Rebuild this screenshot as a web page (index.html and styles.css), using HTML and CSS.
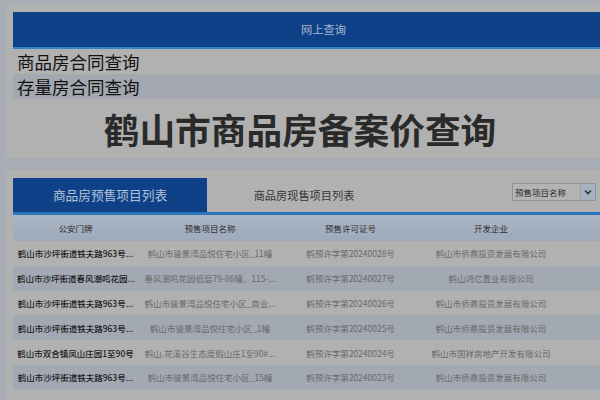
FILE: index.html
```html
<!DOCTYPE html>
<html lang="zh-CN">
<head>
  <meta charset="UTF-8">
  <title>鹤山市商品房备案价查询</title>
  <link rel="stylesheet" href="styles.css">
</head>
<body>
  <div class="page">
    <div class="panel top-panel">
      <div class="bar">网上查询</div>
      <div class="link-row">商品房合同查询</div>
      <div class="link-row alt">存量房合同查询</div>
      <h1 class="title">鹤山市商品房备案价查询</h1>
    </div>

    <div class="panel list-panel">
      <div class="tabs">
        <div class="tab active">商品房预售项目列表</div>
        <div class="tab">商品房现售项目列表</div>
        <div class="search-type">
          <span class="search-label">预售项目名称</span>
          <span class="search-btn">
            <svg width="8" height="6" viewBox="0 0 8 6"><path d="M1,1.5 L4,4.5 L7,1.5" stroke="#2c3440" stroke-width="1.6" fill="none"/></svg>
          </span>
        </div>
      </div>
      <table class="list">
        <colgroup>
          <col class="c1"><col class="c2"><col class="c3"><col class="c4"><col class="c5">
        </colgroup>
        <thead>
          <tr><th>公安门牌</th><th>预售项目名称</th><th>预售许可证号</th><th>开发企业</th><th></th></tr>
        </thead>
        <tbody>
          <tr><td class="addr">鹤山市沙坪街道铁夫路963号...</td><td>鹤山市骏景湾品悦住宅小区_11幢</td><td>鹤预许字第20240028号</td><td>鹤山市侨鼎投资发展有限公司</td><td></td></tr>
          <tr class="alt"><td class="addr">鹤山市沙坪街道春风潮鸣花园...</td><td>春风潮鸣花园低层79-86幢、115-...</td><td>鹤预许字第20240027号</td><td>鹤山鸿亿置业有限公司</td><td></td></tr>
          <tr><td class="addr">鹤山市沙坪街道铁夫路963号...</td><td>鹤山市骏景湾品悦住宅小区_商业...</td><td>鹤预许字第20240026号</td><td>鹤山市侨鼎投资发展有限公司</td><td></td></tr>
          <tr class="alt"><td class="addr">鹤山市沙坪街道铁夫路963号...</td><td>鹤山市骏景湾品悦住宅小区_1幢</td><td>鹤预许字第20240025号</td><td>鹤山市侨鼎投资发展有限公司</td><td></td></tr>
          <tr><td class="addr">鹤山市双合镇凤山庄园1至90号</td><td>鹤山.花溪谷生态度假山庄1至90#...</td><td>鹤预许字第20240024号</td><td>鹤山市国祥房地产开发有限公司</td><td></td></tr>
          <tr class="alt"><td class="addr">鹤山市沙坪街道铁夫路963号...</td><td>鹤山市骏景湾品悦住宅小区_15幢</td><td>鹤预许字第20240023号</td><td>鹤山市侨鼎投资发展有限公司</td><td></td></tr>
          <tr class="last"><td></td><td></td><td></td><td></td><td></td></tr>
        </tbody>
      </table>
    </div>
  </div>
</body>
</html>
```

FILE: styles.css
```css
html, body {
  margin: 0;
  overflow: hidden;
}
body {
  background: #a8acb4;
  font-family: "Noto Sans CJK SC", "Noto Sans", sans-serif;
  color: #222;
}
.page {
  width: 700px;
  padding: 4px 0 0 6px;
}
.panel {
  width: 621px;
  padding: 8px 7px;
  background: #b1b1b1;
  border-radius: 4px;
}
.list-panel {
  margin-top: 12px;
}
/* cabeçalho azul */
.bar {
  height: 35px;
  line-height: 35px;
  background: #0f4189;
  border-bottom: 2px solid #2f86cc;
  color: #a9b7cc;
  font-size: 11.3px;
  text-align: center;
}
.link-row {
  height: 25px;
  line-height: 25px;
  padding-left: 4px;
  font-size: 17.5px;
  color: #111;
}
.link-row.alt {
  background: #a4a9b1;
}
.title {
  width: 574px;
  margin: 8px 0 0 0;
  font-size: 35.7px;
  line-height: 43px;
  font-weight: bold;
  color: #2a2a2a;
  text-align: center;
}
.tabs {
  display: flex;
  height: 34px;
  border-bottom: 3px solid #2b77b9;
}
.tab {
  width: 194px;
  line-height: 34px;
  text-align: center;
  font-size: 11.2px;
  color: #363636;
}
.tab.active {
  background: #0f4189;
  color: #b5c2d6;
  font-size: 12.7px;
}
.search-type {
  display: flex;
  align-self: flex-start;
  margin: 5px 38px 0 auto;
  width: 82px;
  height: 16px;
  border: 1px solid #8e939b;
  background: #b3b3b3;
}
.search-label {
  flex: 1;
  padding-left: 2px;
  font-size: 8.5px;
  line-height: 16px;
  color: #2a2a2a;
}
.search-btn {
  width: 14px;
  display: flex;
  align-items: center;
  justify-content: center;
  background: #a7b1c0;
  border-left: 1px solid #9aa1ab;
}
.list {
  width: 621px;
  border-collapse: collapse;
  table-layout: fixed;
  font-size: 8.5px;
}
.c1 { width: 125px; }
.c2 { width: 144px; }
.c3 { width: 137px; }
.c4 { width: 144px; }
.c5 { width: 71px; }
.list th {
  height: 26px;
  padding: 0;
  font-weight: normal;
  color: #2e2e2e;
  background: linear-gradient(#aab5c5, #9ea9b9);
}
.list td {
  height: 24.8px;
  padding: 0 4px;
  text-align: center;
  white-space: nowrap;
  overflow: hidden;
  color: #686868;
}
.list td.addr {
  color: #1a1a1a;
  font-weight: 500;
}
.list tr.alt td {
  background: #a3a9b3;
}
```
